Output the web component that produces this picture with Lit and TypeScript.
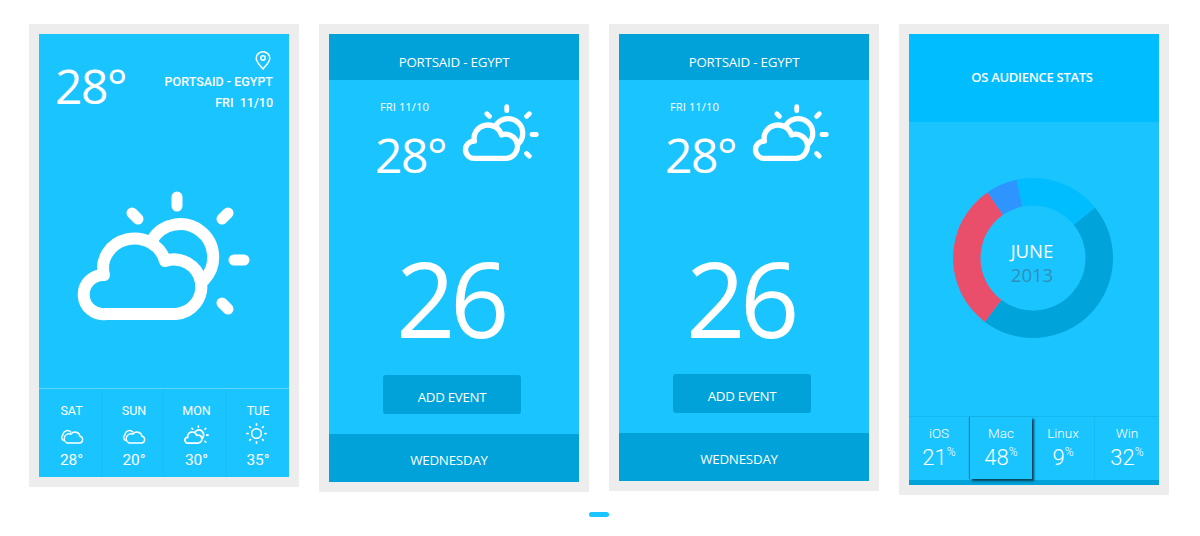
import { LitElement, html, css, svg } from 'lit';
import { customElement, property } from 'lit/decorators.js';

// partly cloudy glyph, coordinates come from the big icon on the first card
const cloudSun = html`<svg class="icon" viewBox="78 191 172 129" fill="none" stroke="#fff" stroke-linecap="round" stroke-linejoin="round">
  <path stroke-width="12" d="M106 314A19.6 19.6 0 1 1 104 275A31 29 0 0 1 165 261A27.3 27.3 0 1 1 176 314Z" />
  <path stroke-width="12" d="M152 240A33 33 0 1 1 204 280" />
  <path stroke-width="11" d="M177 197V206M234 260H244M132 213L138 219M228 213L222 219M222 303L228 309" />
</svg>`;

const twoClouds = html`<svg class="tiny" viewBox="0 0 24 15" fill="none" stroke="#fff" stroke-width="1.4" stroke-linecap="round" stroke-linejoin="round">
  <path d="M7 14H19.5A3.4 3.4 0 0 0 20 7.3A5 5 0 0 0 11 5.2A4.2 4.2 0 0 0 7 14Z" />
  <path d="M3.6 11.5A3.4 3.4 0 0 1 3 5.8A4.5 4.5 0 0 1 10.8 3" />
</svg>`;

const sun = html`<svg class="tiny sun" viewBox="0 0 20 20" fill="none" stroke="#fff" stroke-linecap="round">
  <circle cx="10" cy="10" r="4.6" stroke-width="1.5" />
  <path stroke-width="1.6" d="M10 .8V2M10 18V19.2M.8 10H2M18 10H19.2M3.5 3.5L4.3 4.3M16.5 3.5L15.7 4.3M3.5 16.5L4.3 15.7M16.5 16.5L15.7 15.7" />
</svg>`;

const forecast = [
  { day: 'SAT', icon: twoClouds, temp: '28°' },
  { day: 'SUN', icon: twoClouds, temp: '20°' },
  { day: 'MON', icon: cloudSun, temp: '30°' },
  { day: 'TUE', icon: sun, temp: '35°' }
];

// angles are clockwise from 12 o'clock
const slices = [
  { from: 50.8, to: 217, color: '#00a4db' },
  { from: 217, to: 325.4, color: '#e94f6b' },
  { from: 325.4, to: 348.3, color: '#2e94ff' },
  { from: 348.3, to: 410.8, color: '#00bdff' }
];

const stats = [
  { name: 'iOS', value: 21 },
  { name: 'Mac', value: 48, active: true },
  { name: 'Linux', value: 9 },
  { name: 'Win', value: 32 }
];

function slicePath(from: number, to: number) {
  const R = 80;
  const r = 52.5;
  const point = (radius: number, deg: number) => {
    const a = (deg * Math.PI) / 180;
    return `${(80 + radius * Math.sin(a)).toFixed(2)} ${(80 - radius * Math.cos(a)).toFixed(2)}`;
  };
  const large = to - from > 180 ? 1 : 0;
  return `M${point(R, from)}A${R} ${R} 0 ${large} 1 ${point(R, to)}L${point(r, to)}A${r} ${r} 0 ${large} 0 ${point(r, from)}Z`;
}

@customElement('event-card')
export class EventCard extends LitElement {
  @property({ type: Number }) height = 448;

  static styles = css`
    :host {
      display: block;
      padding: 10px;
      background: #ededed;
    }

    .screen {
      display: flex;
      flex-direction: column;
      background: #1ac4ff;
      color: #fff;
      font-family: 'Open Sans', sans-serif;
    }

    .bar {
      display: flex;
      align-items: center;
      justify-content: center;
      flex: none;
      height: 46px;
      box-sizing: border-box;
      padding-top: 10px;
      background: #00a2d9;
      font-size: 13.3px;
      letter-spacing: -0.2px;
    }

    .bar.bottom {
      height: 48px;
      padding: 4px 10px 0 0;
    }

    .main {
      display: flex;
      flex-direction: column;
      flex: 1;
    }

    .now {
      display: flex;
      align-items: flex-start;
      gap: 17px;
      padding: 20px 0 0 46px;
      height: 84px;
    }

    .date {
      margin-left: 5px;
      font-size: 11.3px;
      line-height: 14px;
    }

    .temp {
      margin-top: 13px;
      font-size: 48px;
      font-weight: 400;
      line-height: 56px;
      letter-spacing: -1.5px;
    }

    .icon {
      display: block;
      flex: none;
      overflow: visible;
      margin-top: 4px;
      width: 76px;
      height: 57px;
    }

    .big {
      margin-top: 59px;
      padding-right: 8px;
      text-align: center;
      font-size: 104px;
      font-weight: 400;
      line-height: 110px;
      letter-spacing: -5.5px;
    }

    .add {
      align-self: flex-start;
      margin: auto 0 20px 54px;
      padding: 5px 0 0;
      width: 138px;
      height: 39px;
      box-sizing: border-box;
      border: none;
      border-radius: 3px;
      background: #00a2d9;
      color: #fff;
      font: 400 13.3px 'Open Sans', sans-serif;
      letter-spacing: -0.3px;
    }
  `;

  render() {
    return html`
      <div class="screen" style="height:${this.height}px">
        <div class="bar">PORTSAID - EGYPT</div>
        <div class="main">
          <div class="now">
            <div>
              <div class="date">FRI 11/10</div>
              <div class="temp">28°</div>
            </div>
            ${cloudSun}
          </div>
          <div class="big">26</div>
          <button class="add">ADD EVENT</button>
        </div>
        <div class="bar bottom">WEDNESDAY</div>
      </div>
    `;
  }
}

@customElement('app-root')
export class AppRoot extends LitElement {
  static styles = css`
    :host {
      display: block;
      width: 1200px;
      height: 536px;
      overflow: hidden;
      background: #fff;
    }

    .cards {
      display: flex;
      align-items: flex-start;
      gap: 20px;
      padding: 24px 0 0 29px;
    }

    .card {
      flex: none;
      width: 250px;
      padding: 10px;
      background: #ededed;
    }

    event-card {
      flex: none;
      width: 250px;
    }

    .screen {
      display: flex;
      flex-direction: column;
      background: #1ac4ff;
      color: #fff;
    }

    /* first card */
    .weather {
      height: 443px;
      font-family: Roboto, sans-serif;
    }

    .head {
      display: flex;
      justify-content: space-between;
      flex: none;
      height: 157px;
      box-sizing: border-box;
      padding: 17px 16px 0;
    }

    .head .temp {
      margin-top: 7px;
      font: 400 48px/56px 'Open Sans', sans-serif;
      letter-spacing: -1.5px;
    }

    .place {
      display: flex;
      flex-direction: column;
      align-items: flex-end;
      font-size: 12.5px;
      font-weight: 500;
      line-height: 21px;
    }

    .pin {
      display: block;
      margin: 0 2px 1px 0;
      width: 16px;
      height: 19px;
    }

    .hero {
      flex: 1;
      padding-left: 39px;
    }

    .hero .icon {
      display: block;
      overflow: visible;
      width: 172px;
      height: 129px;
    }

    .forecast {
      display: grid;
      grid-template-columns: 63px 62px 63px 62px;
      flex: none;
      height: 89px;
      box-sizing: border-box;
      border-top: 1px solid #5ed6ff;
    }

    .day {
      display: flex;
      flex-direction: column;
      align-items: center;
      padding: 14px 0 0 3px;
      border-right: 1px solid #19bcf4;
      font-size: 12.5px;
      line-height: 16px;
    }

    .day:last-child {
      padding-left: 0;
      border-right: none;
    }

    .glyph {
      display: flex;
      align-items: flex-end;
      justify-content: center;
      margin-top: 2px;
      height: 23px;
    }

    .glyph .tiny {
      display: block;
      width: 24px;
      height: 15px;
    }

    .glyph .tiny.sun {
      width: 21px;
      height: 21px;
      margin: 0 3px 0 0;
    }

    .glyph .icon {
      display: block;
      overflow: visible;
      width: 25px;
      height: 19px;
    }

    .day .deg {
      margin-top: 6px;
      font-size: 15.5px;
      line-height: 20px;
    }

    /* last card */
    .stats {
      height: 451px;
      font-family: 'Open Sans', sans-serif;
    }

    .title {
      display: flex;
      align-items: center;
      justify-content: center;
      flex: none;
      height: 88px;
      box-sizing: border-box;
      padding: 0 4px 2px 0;
      background: #00bdff;
      font-size: 13px;
      font-weight: 600;
      letter-spacing: -0.3px;
    }

    .chart {
      flex: 1;
      padding: 56px 0 0 44px;
    }

    .donut {
      display: grid;
      width: 160px;
      height: 160px;
    }

    .donut > * {
      grid-area: 1 / 1;
    }

    .donut svg {
      display: block;
    }

    .label {
      display: flex;
      flex-direction: column;
      align-items: center;
      justify-content: center;
      padding: 10px 2px 0 0;
      font-size: 18.5px;
      line-height: 24px;
    }

    .label span {
      color: #2f8fb8;
    }

    .tabs {
      display: grid;
      grid-template-columns: 61px 62px 63px 64px;
      flex: none;
      height: 69px;
      box-sizing: border-box;
      padding-bottom: 6px;
      border-top: 1px solid #14b8f0;
      background: linear-gradient(#1ac4ff 63px, #00a2d9 63px);
      font-family: Roboto, sans-serif;
    }

    .tab {
      position: relative;
      display: flex;
      flex-direction: column;
      align-items: center;
      padding-top: 8px;
      border-right: 1px solid #16bbf4;
      font-size: 13.5px;
      font-weight: 300;
      line-height: 16px;
    }

    .tab:last-child {
      border-right: none;
    }

    .tab.active {
      z-index: 1;
      border-right: none;
      background: #1ac4ff;
      box-shadow: 2px 2px 2px #063f58, -1px 0 1px #0a86b0;
    }

    .value {
      margin-top: 4px;
      font-size: 22px;
      line-height: 26px;
    }

    .value sup {
      font-size: 12px;
      line-height: 0;
      vertical-align: 9px;
    }

    .pager {
      margin: 17px 0 0 589px;
      width: 20px;
      height: 5px;
      border-radius: 3px;
      background: #1ac4ff;
    }
  `;

  render() {
    return html`
      <div class="cards">
        <div class="card">
          <div class="screen weather">
            <div class="head">
              <div class="temp">28°</div>
              <div class="place">
                <svg class="pin" viewBox="0 0 16 19" fill="none" stroke="#fff" stroke-width="1.5">
                  <path d="M8 18C4.5 14 1.2 10.8 1.2 7.2A6.8 6.5 0 0 1 14.8 7.2C14.8 10.8 11.5 14 8 18Z" />
                  <circle cx="8" cy="7" r="2.2" />
                </svg>
                <div>PORTSAID - EGYPT</div>
                <div>FRI&nbsp; 11/10</div>
              </div>
            </div>
            <div class="hero">${cloudSun}</div>
            <div class="forecast">
              ${forecast.map(
                (f) => html`
                  <div class="day">
                    <div>${f.day}</div>
                    <div class="glyph">${f.icon}</div>
                    <div class="deg">${f.temp}</div>
                  </div>
                `
              )}
            </div>
          </div>
        </div>

        <event-card .height=${448}></event-card>
        <event-card .height=${447}></event-card>

        <div class="card">
          <div class="screen stats">
            <div class="title">OS AUDIENCE STATS</div>
            <div class="chart">
              <div class="donut">
                <svg viewBox="0 0 160 160" width="160" height="160">
                  ${slices.map((s) => svg`<path fill=${s.color} d=${slicePath(s.from, s.to)} />`)}
                </svg>
                <div class="label">JUNE<span>2013</span></div>
              </div>
            </div>
            <div class="tabs">
              ${stats.map(
                (s) => html`
                  <div class="tab ${s.active ? 'active' : ''}">
                    <div>${s.name}</div>
                    <div class="value">${s.value}<sup>%</sup></div>
                  </div>
                `
              )}
            </div>
          </div>
        </div>
      </div>
      <div class="pager"></div>
    `;
  }
}
